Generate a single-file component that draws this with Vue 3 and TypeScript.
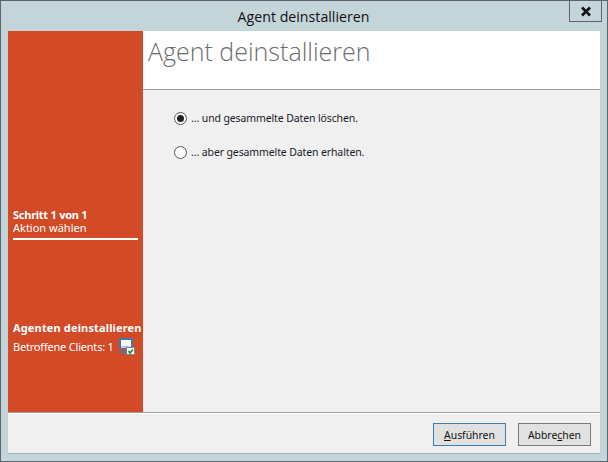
<script setup lang="ts">
const options = [
  { label: '… und gesammelte Daten löschen.', checked: true },
  { label: '… aber gesammelte Daten erhalten.', checked: false },
]
</script>

<template>
  <div class="window">
    <div class="titlebar">
      <span class="title">Agent deinstallieren</span>
      <div class="close">
        <svg width="14" height="11" viewBox="0 0 14 11">
          <path d="M3 1.5 L11 9.5 M11 1.5 L3 9.5" stroke="#111" stroke-width="2.6" fill="none" />
        </svg>
      </div>
    </div>
    <div class="client">
      <div class="upper">
        <aside class="sidebar">
          <div class="step">
            <div class="step-bold">Schritt 1 von 1</div>
            <div class="step-text">Aktion wählen</div>
            <div class="step-line"></div>
          </div>
          <div class="agents">
            <div class="agents-title">Agenten deinstallieren</div>
            <div class="agents-row">
              <span class="affected">Betroffene Clients: 1</span>
              <svg class="client-icon" width="16" height="17" viewBox="0 0 16 17">
                <rect x="1" y="1" width="12" height="9" fill="#fff" stroke="#3f78b5" stroke-width="2" />
                <rect x="2" y="8" width="10" height="2" fill="#b5cfe6" />
                <rect x="0" y="12" width="7" height="1" fill="#3f78b5" />
                <rect x="1" y="14" width="6" height="1" fill="#3f78b5" />
                <rect x="7.5" y="9.5" width="8" height="7" fill="#fff" stroke="#7d8388" />
                <path d="M9.5 13 L11 15 L14 11.5" stroke="#1d8a4a" stroke-width="1.8" fill="none" />
              </svg>
            </div>
          </div>
        </aside>
        <main class="content">
          <header class="head">
            <h1>Agent deinstallieren</h1>
          </header>
          <div class="options">
            <label v-for="opt in options" :key="opt.label" class="option">
              <span class="radio"><span v-if="opt.checked" class="dot"></span></span>
              <span class="opt-label">{{ opt.label }}</span>
            </label>
          </div>
        </main>
      </div>
      <footer class="footer">
        <button class="btn primary"><u>A</u>usführen</button>
        <button class="btn">Abbre<u>c</u>hen</button>
      </footer>
    </div>
  </div>
</template>

<style>
html, body {
  margin: 0;
  padding: 0;
}
</style>

<style scoped>
.window {
  box-sizing: border-box;
  width: 608px;
  height: 462px;
  display: flex;
  flex-direction: column;
  background: #c4d5da;
  border: 1px solid #5c6670;
  padding: 0 7px 7px 7px;
  font-family: "Noto Sans", sans-serif;
  font-size: 11px;
  color: #1a1a1a;
}
.titlebar {
  position: relative;
  height: 30px;
  display: flex;
  align-items: center;
  justify-content: center;
  flex: none;
}
.title {
  font-family: "Open Sans", sans-serif;
  font-size: 14.2px;
  margin-left: -1px;
  color: #111;
}
.close {
  position: absolute;
  right: -2px;
  top: 0;
  width: 33px;
  height: 21px;
  box-sizing: border-box;
  border: 1px solid #5c6670;
  border-top: none;
  display: flex;
  align-items: center;
  justify-content: center;
}
.client {
  flex: 1;
  display: flex;
  flex-direction: column;
  background: #f0f0f0;
  border-bottom: 1px solid #a9b3b6;
  min-height: 0;
}
.upper {
  flex: 1;
  display: flex;
  min-height: 0;
  border-bottom: 1px solid #a0a0a0;
}
.sidebar {
  width: 135px;
  flex: none;
  background: #d34a26;
  color: #fff;
  display: flex;
  flex-direction: column;
  padding: 177px 0 0 5px;
  box-sizing: border-box;
}
.step-bold, .agents-title {
  font-weight: bold;
  white-space: nowrap;
  line-height: 15px;
}
.step-bold {
  letter-spacing: -0.25px;
  line-height: 13px;
}
.agents-title {
  letter-spacing: 0.15px;
}
.step-text {
  line-height: 13px;
}
.step-line {
  width: 125px;
  height: 2px;
  margin-top: 4px;
  background: #fff;
}
.agents {
  margin-top: 80px;
}
.agents-row {
  display: flex;
  align-items: center;
  gap: 5px;
  margin-top: 3px;
  white-space: nowrap;
}
.affected {
  letter-spacing: -0.2px;
}
.client-icon {
  flex: none;
}
.content {
  flex: 1;
  display: flex;
  flex-direction: column;
  min-width: 0;
}
.head {
  height: 58px;
  flex: none;
  background: #fff;
  border-bottom: 1px solid #a0a0a0;
  box-sizing: content-box;
}
h1 {
  margin: 0;
  padding-left: 5px;
  font-family: "Open Sans", sans-serif;
  font-weight: 300;
  font-size: 25px;
  line-height: 41px;
  color: #6d6d6d;
}
.options {
  display: flex;
  flex-direction: column;
  gap: 20px;
  padding: 21px 0 0 31px;
}
.option {
  display: flex;
  align-items: center;
  gap: 4px;
  height: 14px;
  font-size: 10.5px;
  letter-spacing: -0.12px;
  color: #1a1a2a;
}
.radio {
  box-sizing: border-box;
  width: 13px;
  height: 13px;
  border-radius: 50%;
  border: 1px solid #555;
  background: #fff;
  display: flex;
  align-items: center;
  justify-content: center;
}
.dot {
  width: 7px;
  height: 7px;
  border-radius: 50%;
  background: #222;
}
.footer {
  height: 40px;
  flex: none;
  box-sizing: border-box;
  border-top: 1px solid #fff;
  display: flex;
  justify-content: flex-end;
  align-items: flex-start;
  gap: 12px;
  padding: 9px 9px 0 0;
}
.btn {
  width: 73px;
  height: 23px;
  box-sizing: border-box;
  padding: 0;
  background: #e1e1e1;
  border: 1px solid #7a7a7a;
  font-family: "Noto Sans", sans-serif;
  font-size: 10.4px;
  color: #111;
}
.btn.primary {
  border-color: #3c7fb1;
}
</style>
